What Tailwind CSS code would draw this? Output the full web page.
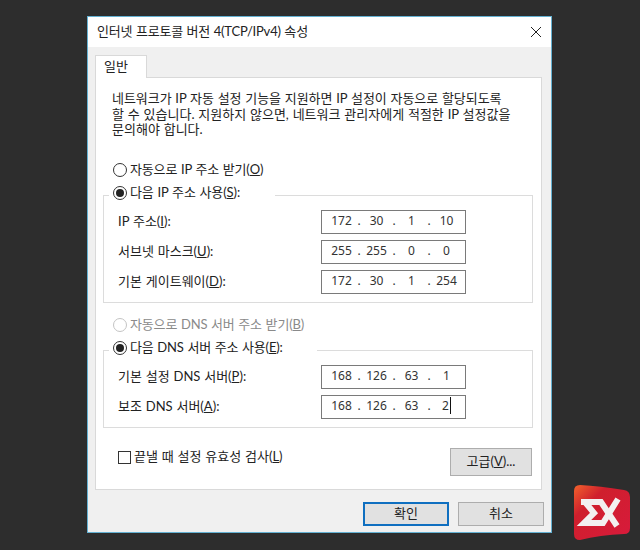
<!DOCTYPE html>
<html lang="ko">

<head>
    <meta charset="UTF-8">
    <title>인터넷 프로토콜 버전 4(TCP/IPv4) 속성</title>
    <script src="https://cdn.jsdelivr.net/npm/@tailwindcss/browser@4"></script>
</head>

<body class="relative w-[640px] h-[550px] overflow-hidden bg-[#2d2d2d] pt-[16px] pl-[87px] font-['Lato','Noto_Sans_CJK_KR',sans-serif] text-[13px] text-[#222] [word-spacing:0.5px]">
    <!-- dialog -->
    <div class="w-[465px] h-[517px] border border-[#64b1d2] bg-[#f0f0f0]">
        <div class="h-[30px] bg-white flex items-center justify-between pl-[9px] pr-[9px]">
            <span class="tracking-[-0.2px]">인터넷 프로토콜 버전 4(TCP/IPv4) 속성</span>
            <svg width="12" height="12" viewBox="0 0 12 12" fill="none" stroke="#222" stroke-width="1">
                <path d="M1 1l10 10M11 1L1 11" />
            </svg>
        </div>

        <!-- tab -->
        <div class="h-[30px] pt-[8px] pl-[7px]">
            <div class="relative z-10 w-[52px] h-[23px] bg-white border border-b-0 border-[#d9d9d9] pl-[8px] leading-[20px]">일반</div>
        </div>

        <!-- panel -->
        <div class="ml-[7px] w-[447px] h-[413px] bg-white border border-[#d9d9d9] pt-[13px] pl-[7px] pr-[8px]">
            <p class="pl-[9px] leading-[15.5px] whitespace-nowrap">
                <span class="block tracking-[-0.05px]">네트워크가 IP 자동 설정 기능을 지원하면 IP 설정이 자동으로 할당되도록</span>
                <span class="block">할 수 있습니다. 지원하지 않으면, 네트워크 관리자에게 적절한 IP 설정값을</span>
                <span class="block">문의해야 합니다.</span>
            </p>

            <div class="mt-[24.5px] ml-[10px] h-[16px] flex items-center gap-[3px]">
                <span class="w-[14px] h-[14px] rounded-full border border-[#333] bg-white"></span>
                <span class="tracking-[-0.15px]">자동으로 IP 주소 받기(<u>O</u>)</span>
            </div>

            <!-- ip group -->
            <div class="mt-[17px] h-[108px] border border-[#dcdcdc]">
                <div class="-mt-[11px] ml-[5px] mb-[9px] w-[166px] h-[16px] bg-white pl-[4px] flex items-center gap-[3px]">
                    <span class="w-[14px] h-[14px] rounded-full border border-[#333] bg-white flex items-center justify-center"><span class="w-[8px] h-[8px] rounded-full bg-[#222]"></span></span>
                    <span class="tracking-[-0.1px]">다음 IP 주소 사용(<u>S</u>):</span>
                </div>
                <div class="flex flex-col gap-[6px] pl-[14px]">
                    <div class="flex items-center justify-between pr-[66px]">
                        <span>IP 주소(<u>I</u>):</span>
                        <div class="w-[145px] h-[24px] border border-[#7a7a7a] flex items-center pl-[5.5px] pb-[2px] font-['Noto_Sans',sans-serif] text-[12px] text-[#333]"><span class="w-[28px] text-center">172</span><span class="w-[7px] text-center">.</span><span class="w-[28px] text-center">30</span><span class="w-[7px] text-center">.</span><span class="w-[28px] text-center">1</span><span class="w-[7px] text-center">.</span><span class="w-[28px] text-center">10</span></div>
                    </div>
                    <div class="flex items-center justify-between pr-[66px]">
                        <span>서브넷 마스크(<u>U</u>):</span>
                        <div class="w-[145px] h-[24px] border border-[#7a7a7a] flex items-center pl-[5.5px] pb-[2px] font-['Noto_Sans',sans-serif] text-[12px] text-[#333]"><span class="w-[28px] text-center">255</span><span class="w-[7px] text-center">.</span><span class="w-[28px] text-center">255</span><span class="w-[7px] text-center">.</span><span class="w-[28px] text-center">0</span><span class="w-[7px] text-center">.</span><span class="w-[28px] text-center">0</span></div>
                    </div>
                    <div class="flex items-center justify-between pr-[66px]">
                        <span>기본 게이트웨이(<u>D</u>):</span>
                        <div class="w-[145px] h-[24px] border border-[#7a7a7a] flex items-center pl-[5.5px] pb-[2px] font-['Noto_Sans',sans-serif] text-[12px] text-[#333]"><span class="w-[28px] text-center">172</span><span class="w-[7px] text-center">.</span><span class="w-[28px] text-center">30</span><span class="w-[7px] text-center">.</span><span class="w-[28px] text-center">1</span><span class="w-[7px] text-center">.</span><span class="w-[28px] text-center">254</span></div>
                    </div>
                </div>
            </div>

            <div class="mt-[14px] ml-[10px] h-[16px] flex items-center gap-[3px] text-[#8a8a8a]">
                <span class="w-[14px] h-[14px] rounded-full border border-[#c4c4c4] bg-white"></span>
                <span class="tracking-[-0.15px]">자동으로 DNS 서버 주소 받기(<u>B</u>)</span>
            </div>

            <!-- dns group -->
            <div class="mt-[17px] h-[78px] border border-[#dcdcdc]">
                <div class="-mt-[11px] ml-[5px] mb-[9px] w-[208px] h-[16px] bg-white pl-[4px] flex items-center gap-[3px]">
                    <span class="w-[14px] h-[14px] rounded-full border border-[#333] bg-white flex items-center justify-center"><span class="w-[8px] h-[8px] rounded-full bg-[#222]"></span></span>
                    <span class="tracking-[-0.15px]">다음 DNS 서버 주소 사용(<u>E</u>):</span>
                </div>
                <div class="flex flex-col gap-[6px] pl-[14px]">
                    <div class="flex items-center justify-between pr-[66px]">
                        <span>기본 설정 DNS 서버(<u>P</u>):</span>
                        <div class="w-[145px] h-[24px] border border-[#7a7a7a] flex items-center pl-[5.5px] pb-[2px] font-['Noto_Sans',sans-serif] text-[12px] text-[#333]"><span class="w-[28px] text-center">168</span><span class="w-[7px] text-center">.</span><span class="w-[28px] text-center">126</span><span class="w-[7px] text-center">.</span><span class="w-[28px] text-center">63</span><span class="w-[7px] text-center">.</span><span class="w-[28px] text-center">1</span></div>
                    </div>
                    <div class="flex items-center justify-between pr-[66px]">
                        <span>보조 DNS 서버(<u>A</u>):</span>
                        <div class="w-[145px] h-[24px] border border-[#7a7a7a] flex items-center pl-[5.5px] pb-[2px] font-['Noto_Sans',sans-serif] text-[12px] text-[#333]"><span class="w-[28px] text-center">168</span><span class="w-[7px] text-center">.</span><span class="w-[28px] text-center">126</span><span class="w-[7px] text-center">.</span><span class="w-[28px] text-center">63</span><span class="w-[7px] text-center">.</span><span class="w-[28px] text-center"><span class="border-r border-[#111] pr-[1px]">2</span></span></div>
                    </div>
                </div>
            </div>

            <div class="mt-[20px] flex items-center justify-between pl-[15px] pr-[1px]">
                <div class="flex items-center gap-[3px] -mt-[10px]">
                    <span class="w-[13px] h-[13px] border border-[#333] bg-white"></span>
                    <span>끝낼 때 설정 유효성 검사(<u>L</u>)</span>
                </div>
                <button class="w-[82px] h-[28px] bg-[#e1e1e1] border border-[#adadad]">고급(<u>V</u>)...</button>
            </div>
        </div>

        <!-- footer -->
        <div class="flex justify-end gap-[9px] pt-[12px] pr-[7px]">
            <button class="w-[86px] h-[24px] bg-[#e1e1e1] border-2 border-[#0f6fc0]">확인</button>
            <button class="w-[86px] h-[24px] bg-[#e1e1e1] border border-[#adadad]">취소</button>
        </div>
    </div>

    <!-- watermark logo -->
    <svg class="absolute left-[574px] top-[485px]" width="56" height="55" viewBox="0 0 56 55">
        <defs>
            <linearGradient id="logoRed" x1="0" y1="0" x2="1" y2="1">
                <stop offset="0" stop-color="#f2622c" />
                <stop offset="0.3" stop-color="#cf1f2d" />
                <stop offset="1" stop-color="#d81a3c" />
            </linearGradient>
        </defs>
        <path d="M6 0Q26 1 50 5Q56 6 56 12V43Q56 49 50 49Q26 50 6 55Q0 55 0 49V6Q0 0 6 0Z" fill="url(#logoRed)" />
        <path d="M7 17H27L43 41" fill="none" stroke="#f3f0f0" stroke-width="6" />
        <path d="M44 14L29 38H10L20 28L11 17" fill="none" stroke="#f3f0f0" stroke-width="6" />
    </svg>
</body>

</html>
